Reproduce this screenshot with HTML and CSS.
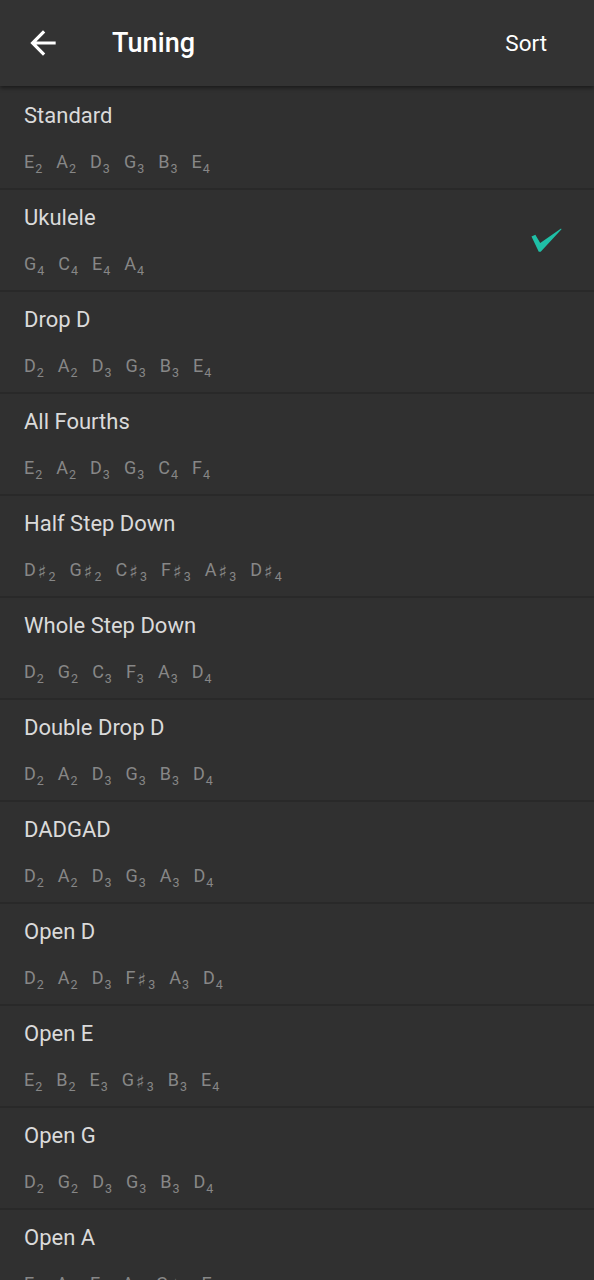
FILE: index.html
```html
<!DOCTYPE html>
<html>
<head>
<meta charset="utf-8">
<link rel="stylesheet" href="styles.css">
</head>
<body>
<header class="bar">
  <svg class="back" viewBox="0 0 24 24" width="38" height="38"><path fill="#fff" d="M20 11H7.83l5.59-5.59L12 4l-8 8 8 8 1.41-1.41L7.83 13H20v-2z"/></svg>
  <div class="title">Tuning</div>
  <div class="sort">Sort</div>
</header>
<main class="list">
  <div class="row"><div class="info"><div class="name">Standard</div><div class="notes"><span class="n">E<sub>2</sub></span><span class="n">A<sub>2</sub></span><span class="n">D<sub>3</sub></span><span class="n">G<sub>3</sub></span><span class="n">B<sub>3</sub></span><span class="n">E<sub>4</sub></span></div></div></div>
  <div class="row"><div class="info"><div class="name">Ukulele</div><div class="notes"><span class="n">G<sub>4</sub></span><span class="n">C<sub>4</sub></span><span class="n">E<sub>4</sub></span><span class="n">A<sub>4</sub></span></div></div>
    <svg class="check" viewBox="0 0 32 26" width="31" height="26"><path fill="#1fbfa6" d="M0.5 9.5 L4.5 7.5 L9.5 16 L31 1 L31.5 2 L10 25 L8 25 Z"/></svg></div>
  <div class="row"><div class="info"><div class="name">Drop D</div><div class="notes"><span class="n">D<sub>2</sub></span><span class="n">A<sub>2</sub></span><span class="n">D<sub>3</sub></span><span class="n">G<sub>3</sub></span><span class="n">B<sub>3</sub></span><span class="n">E<sub>4</sub></span></div></div></div>
  <div class="row"><div class="info"><div class="name">All Fourths</div><div class="notes"><span class="n">E<sub>2</sub></span><span class="n">A<sub>2</sub></span><span class="n">D<sub>3</sub></span><span class="n">G<sub>3</sub></span><span class="n">C<sub>4</sub></span><span class="n">F<sub>4</sub></span></div></div></div>
  <div class="row"><div class="info"><div class="name">Half Step Down</div><div class="notes"><span class="n">D<i>♯</i><sub>2</sub></span><span class="n">G<i>♯</i><sub>2</sub></span><span class="n">C<i>♯</i><sub>3</sub></span><span class="n">F<i>♯</i><sub>3</sub></span><span class="n">A<i>♯</i><sub>3</sub></span><span class="n">D<i>♯</i><sub>4</sub></span></div></div></div>
  <div class="row"><div class="info"><div class="name">Whole Step Down</div><div class="notes"><span class="n">D<sub>2</sub></span><span class="n">G<sub>2</sub></span><span class="n">C<sub>3</sub></span><span class="n">F<sub>3</sub></span><span class="n">A<sub>3</sub></span><span class="n">D<sub>4</sub></span></div></div></div>
  <div class="row"><div class="info"><div class="name">Double Drop D</div><div class="notes"><span class="n">D<sub>2</sub></span><span class="n">A<sub>2</sub></span><span class="n">D<sub>3</sub></span><span class="n">G<sub>3</sub></span><span class="n">B<sub>3</sub></span><span class="n">D<sub>4</sub></span></div></div></div>
  <div class="row"><div class="info"><div class="name">DADGAD</div><div class="notes"><span class="n">D<sub>2</sub></span><span class="n">A<sub>2</sub></span><span class="n">D<sub>3</sub></span><span class="n">G<sub>3</sub></span><span class="n">A<sub>3</sub></span><span class="n">D<sub>4</sub></span></div></div></div>
  <div class="row"><div class="info"><div class="name">Open D</div><div class="notes"><span class="n">D<sub>2</sub></span><span class="n">A<sub>2</sub></span><span class="n">D<sub>3</sub></span><span class="n">F<i>♯</i><sub>3</sub></span><span class="n">A<sub>3</sub></span><span class="n">D<sub>4</sub></span></div></div></div>
  <div class="row"><div class="info"><div class="name">Open E</div><div class="notes"><span class="n">E<sub>2</sub></span><span class="n">B<sub>2</sub></span><span class="n">E<sub>3</sub></span><span class="n">G<i>♯</i><sub>3</sub></span><span class="n">B<sub>3</sub></span><span class="n">E<sub>4</sub></span></div></div></div>
  <div class="row"><div class="info"><div class="name">Open G</div><div class="notes"><span class="n">D<sub>2</sub></span><span class="n">G<sub>2</sub></span><span class="n">D<sub>3</sub></span><span class="n">G<sub>3</sub></span><span class="n">B<sub>3</sub></span><span class="n">D<sub>4</sub></span></div></div></div>
  <div class="row"><div class="info"><div class="name">Open A</div><div class="notes"><span class="n">E<sub>2</sub></span><span class="n">A<sub>2</sub></span><span class="n">E<sub>3</sub></span><span class="n">A<sub>3</sub></span><span class="n">C<i>♯</i><sub>4</sub></span><span class="n">E<sub>4</sub></span></div></div></div>
</main>
</body>
</html>
```
FILE: styles.css
```css
html, body {
  margin: 0;
  padding: 0;
  background: #303030;
  font-family: Roboto, "Liberation Sans", sans-serif;
  overflow: hidden;
}
.bar {
  position: relative;
  z-index: 2;
  height: 86px;
  background: #333333;
  display: flex;
  align-items: center;
  box-shadow: 0 2px 4px rgba(0, 0, 0, 0.45);
  color: #fff;
}
.back {
  margin-left: 24px;
  margin-top: -1px;
  flex: none;
}
.title {
  margin-left: 50px;
  font-size: 27px;
  font-weight: 500;
  letter-spacing: 0.1px;
}
.sort {
  margin-left: auto;
  margin-right: 47px;
  font-size: 22.5px;
  font-weight: 400;
}
.list {
  display: flex;
  flex-direction: column;
  padding-top: 2px;
}
.row {
  display: flex;
  align-items: center;
  padding: 16px 32px 14px 24px;
  border-bottom: 2px solid #292929;
}
.info {
  flex: 1;
}
.name {
  height: 24px;
  font-size: 22px;
  line-height: 24px;
  color: #dadada;
}
.notes {
  margin-top: 22px;
  height: 24px;
  display: flex;
  gap: 14px;
  font-size: 18px;
  line-height: 24px;
  color: #878787;
}
.n {
  display: inline-flex;
  align-items: baseline;
  height: 24px;
}
.n i {
  font-style: normal;
  font-family: "DejaVu Sans", sans-serif;
  font-size: 18px;
  line-height: 1;
  margin-left: 2px;
  margin-right: 1px;
  position: relative;
  top: 2px;
}
.n sub {
  font-size: 12.5px;
  line-height: 1;
  vertical-align: baseline;
  position: relative;
  top: 5px;
  margin-left: 1px;
}
.check {
  flex: none;
  margin-top: -2px;
}
```
